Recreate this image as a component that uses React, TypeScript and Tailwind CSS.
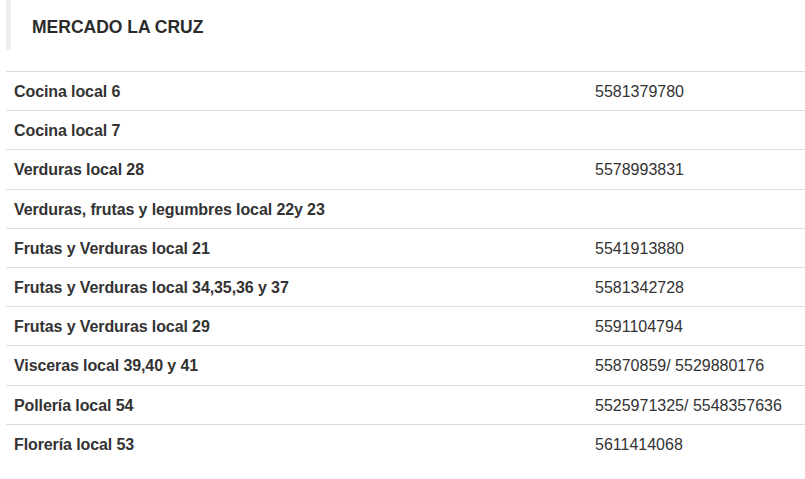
const rows: [string, string][] = [
  ["Cocina local 6", "5581379780"],
  ["Cocina local 7", ""],
  ["Verduras local 28", "5578993831"],
  ["Verduras, frutas y legumbres local 22y 23", ""],
  ["Frutas y Verduras local 21", "5541913880"],
  ["Frutas y Verduras local 34,35,36 y 37", "5581342728"],
  ["Frutas y Verduras local 29", "5591104794"],
  ["Visceras local 39,40 y 41", "55870859/ 5529880176"],
  ["Pollería local 54", "5525971325/ 5548357636"],
  ["Florería local 53", "5611414068"],
];

export default function App() {
  return (
    <div className="min-h-screen bg-white pl-[6px] text-[#333] font-['Liberation_Sans',Arial,sans-serif]">
      {/* Heading block */}
      <div className="h-[50px] border-l-[5px] border-[#eee] pl-[21px] pt-[15px]">
        <h2 className="text-[17.5px] font-bold leading-[24px] text-[#2b2b2b]">MERCADO LA CRUZ</h2>
      </div>

      {/* Table */}
      <div className="mt-[21px] text-[16px]">
        {rows.map(([name, phone]) => (
          <div
            key={name}
            className="grid grid-cols-[581px_1fr] border-t border-[#ddd] leading-[22.2px]"
          >
            <div className="px-2 pt-[9px] pb-[7px] font-bold tracking-[-0.1px]">{name}</div>
            <div className="px-2 pt-[9px] pb-[7px]">{phone}</div>
          </div>
        ))}
      </div>
    </div>
  );
}
